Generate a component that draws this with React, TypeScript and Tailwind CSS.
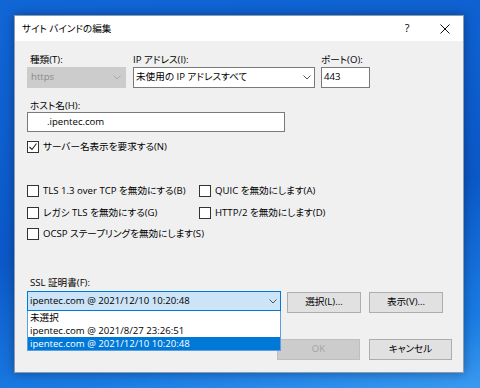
import React from 'react'

const Chevron = ({ color = '#555' }: { color?: string }) => (
  <svg width="8" height="5" viewBox="0 0 8 5" className="shrink-0">
    <polyline points="0.5,0.5 4,4 7.5,0.5" fill="none" stroke={color} strokeWidth="1" />
  </svg>
)

const CheckBox = ({ checked = false }: { checked?: boolean }) => (
  <span className="w-[12px] h-[12px] border border-[#333333] bg-white shrink-0 flex items-center justify-center">
    {checked && (
      <svg width="10" height="10" viewBox="0 0 10 10">
        <polyline points="1.5,5 4,7.5 8.5,1.5" fill="none" stroke="#222" strokeWidth="1.1" />
      </svg>
    )}
  </span>
)

const CheckItem = ({ label, checked = false, className = '' }: { label: string; checked?: boolean; className?: string }) => (
  <div className={`flex items-center gap-[4px] h-[13px] ${className}`}>
    <CheckBox checked={checked} />
    <span className="leading-[13px] whitespace-nowrap">{label}</span>
  </div>
)

const Button = ({ label, disabled = false, className = '' }: { label: string; disabled?: boolean; className?: string }) => (
  <div
    className={`h-[21px] flex items-center justify-center border ${
      disabled ? 'border-[#bfbfbf] bg-[#cccccc] text-[#a3a3a3]' : 'border-[#adadad] bg-[#e1e1e1] text-black'
    } ${className}`}
  >
    {label}
  </div>
)

export default function App() {
  return (
    <div className="w-[480px] h-[388px] overflow-hidden pt-[15px] pl-[14px] bg-[linear-gradient(170deg,#1166d6_0%,#0b58c8_55%,#1a7be3_85%,#3a9af0_100%)] font-['Open_Sans','Noto_Sans_CJK_JP',sans-serif] text-[9.6px] text-black [font-feature-settings:'palt']">
      <div className="w-[450px] h-[358px] border border-[#8c9bb0] bg-[#f0f0f0] flex flex-col shadow-[0_0_10px_rgba(0,0,0,0.35)]">
        {/* title bar */}
        <div className="h-[25px] bg-white flex items-center shrink-0">
          <span className="pl-[7px] flex-1 leading-[13px]">サイト バインドの編集</span>
          <div className="w-[38px] h-full flex items-center justify-center text-[11px]">?</div>
          <div className="w-[37px] h-full flex items-center justify-center">
            <svg width="10" height="10" viewBox="0 0 10 10">
              <path d="M0.5 0.5 L9.5 9.5 M9.5 0.5 L0.5 9.5" stroke="#111" strokeWidth="1" />
            </svg>
          </div>
        </div>

        {/* body */}
        <div className="flex-1 flex flex-col pl-[12px] pt-[12px]">
          <div className="flex">
            <div className="w-[99px]">
              <div className="h-[13px] leading-[13px] pl-[3px]">種類(T):</div>
              <div className="mt-[1px] h-[21px] bg-[#cccccc] border border-[#cccccc] flex items-center justify-between pl-[3px] pr-[4px] text-[#8a8a8a]">
                <span>https</span>
                <Chevron color="#a8a8a8" />
              </div>
            </div>
            <div className="w-[182px] ml-[7px]">
              <div className="h-[13px] leading-[13px]">IP アドレス(I):</div>
              <div className="mt-[1px] h-[21px] bg-white border border-[#7a7a7a] flex items-center justify-between pl-[2px] pr-[3px]">
                <span>未使用の IP アドレスすべて</span>
                <Chevron />
              </div>
            </div>
            <div className="w-[49px] ml-[6px]">
              <div className="h-[13px] leading-[13px]">ポート(O):</div>
              <div className="mt-[1px] h-[21px] bg-white border border-[#7a7a7a] flex items-center pl-[2px]">443</div>
            </div>
          </div>

          <div className="mt-[11px] h-[13px] leading-[13px] pl-[3px]">ホスト名(H):</div>
          <div className="w-[258px] h-[20px] bg-white border border-[#7a7a7a] flex items-center pl-[19px]">.ipentec.com</div>

          <CheckItem className="mt-[8px]" checked label="サーバー名表示を要求する(N)" />

          <div className="mt-[31px] flex">
            <CheckItem className="w-[172px]" label="TLS 1.3 over TCP を無効にする(B)" />
            <CheckItem label="QUIC を無効にします(A)" />
          </div>
          <div className="mt-[9px] flex">
            <CheckItem className="w-[172px]" label="レガシ TLS を無効にする(G)" />
            <CheckItem label="HTTP/2 を無効にします(D)" />
          </div>
          <CheckItem className="mt-[8px]" label="OCSP ステープリングを無効にします(S)" />

          <div className="mt-[36px] h-[13px] leading-[13px] pl-[3px]">SSL 証明書(F):</div>
          <div className="mt-[2px] flex items-start">
            <div className="relative w-[254px]">
              <div className="h-[20px] bg-[#cce4f7] border border-[#0078d7] flex items-center justify-between pl-[2px] pr-[3px]">
                <span>ipentec.com @ 2021/12/10 10:20:48</span>
                <Chevron />
              </div>
              <div className="absolute z-10 left-0 top-full w-[254px] bg-white border border-t-0 border-[#5c9ee0]">
                <div className="h-[13px] leading-[13px] pl-[2px]">未選択</div>
                <div className="h-[13px] leading-[13px] pl-[2px]">ipentec.com @ 2021/8/27 23:26:51</div>
                <div className="h-[13px] leading-[13px] pl-[2px] bg-[#0078d7] text-white">ipentec.com @ 2021/12/10 10:20:48</div>
              </div>
            </div>
            <Button className="mt-[1px] ml-[6px] w-[74px]" label="選択(L)..." />
            <Button className="mt-[1px] ml-[8px] w-[74px]" label="表示(V)..." />
          </div>

          <div className="mt-auto flex justify-end gap-[9px] pr-[11px] pb-[12px]">
            <Button className="w-[83px]" disabled label="OK" />
            <Button className="w-[83px]" label="キャンセル" />
          </div>
        </div>
      </div>
    </div>
  )
}
